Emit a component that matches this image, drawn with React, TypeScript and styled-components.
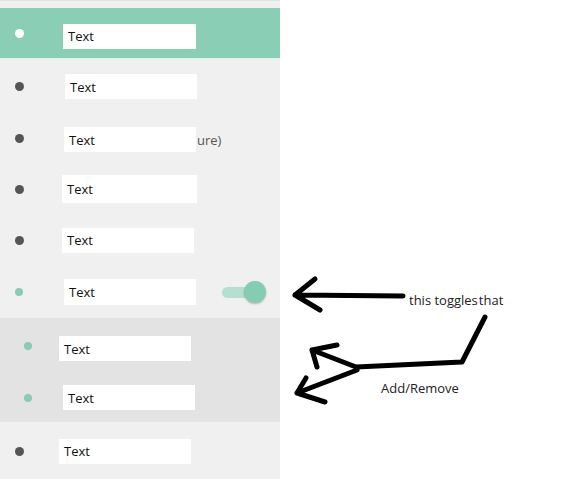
import React from "react";
import styled, { createGlobalStyle } from "styled-components";

const Global = createGlobalStyle`
  html, body { margin: 0; padding: 0; background: #ffffff; }
  body { font-family: "Open Sans", "Liberation Sans", sans-serif; }
`;

const Page = styled.div`
  display: flex;
  width: 581px;
  height: 479px;
  overflow: hidden;
`;

const Panel = styled.div`
  width: 280px;
  flex: none;
  display: flex;
  flex-direction: column;
  background: #f0f0f0;
  padding-top: 6px;
  box-sizing: border-box;
  border-top: 1px solid #e4e4e4;
`;

const Row = styled.div<{ $h: number; $active?: boolean }>`
  height: ${(p) => p.$h}px;
  flex: none;
  display: flex;
  align-items: center;
  box-sizing: border-box;
  background: ${(p) => (p.$active ? "#8acfb5" : "transparent")};
  ${(p) =>
    p.$active
      ? "border-top: 1px solid #e2f3ec; border-bottom: 2px solid #e2f3ec;"
      : ""}
`;

const SubGroup = styled.div`
  display: flex;
  flex-direction: column;
  background: #e3e3e3;
  margin-top: 1px;
`;

const Dot = styled.span<{ $kind: "white" | "dark" | "green"; $x: number }>`
  width: ${(p) => (p.$kind === "green" ? 8 : 9)}px;
  height: ${(p) => (p.$kind === "green" ? 8 : 9)}px;
  border-radius: 50%;
  flex: none;
  margin-left: ${(p) => p.$x}px;
  background: ${(p) =>
    p.$kind === "white" ? "#ffffff" : p.$kind === "green" ? "#86cdb2" : "#555555"};
`;

const Box = styled.div<{ $x: number; $w: number; $h: number; $dy: number }>`
  margin-left: ${(p) => p.$x}px;
  width: ${(p) => p.$w}px;
  height: ${(p) => p.$h}px;
  transform: translateY(${(p) => p.$dy}px);
  flex: none;
  background: #ffffff;
  display: flex;
  align-items: center;
  padding-left: 5px;
  box-sizing: border-box;
  font-size: 13px;
  color: #111111;
`;

const Hidden = styled.span`
  font-size: 13px;
  color: #555555;
  margin-left: 1px;
  transform: translateY(1px);
`;

const Toggle = styled.div`
  position: relative;
  margin-left: auto;
  margin-right: 14px;
  width: 44px;
  height: 22px;
  flex: none;
`;

const Track = styled.div`
  position: absolute;
  left: 0;
  top: 6px;
  width: 34px;
  height: 11px;
  border-radius: 6px;
  background: #b3e0d0;
`;

const Knob = styled.div`
  position: absolute;
  right: 0;
  top: 0;
  width: 22px;
  height: 22px;
  border-radius: 50%;
  background: #84cdb2;
  box-shadow: 0 1px 2px rgba(0, 0, 0, 0.25);
`;

const Annotation = styled.div`
  position: relative;
  flex: 1;
  height: 479px;
`;

const Drawing = styled.svg`
  position: absolute;
  left: 0;
  top: 0;
`;

const Note = styled.div<{ $x: number; $y: number }>`
  position: absolute;
  left: ${(p) => p.$x}px;
  top: ${(p) => p.$y}px;
  display: flex;
  gap: 1px;
  font-size: 13px;
  line-height: 18px;
  color: #222222;
  white-space: nowrap;
`;

type Item = {
  h: number;
  dot: "white" | "dark" | "green";
  dotX: number;
  boxX: number;
  w: number;
  bh: number;
  dy: number;
};

const mainTop: Item[] = [
  { h: 53, dot: "white", dotX: 15, boxX: 39, w: 133, bh: 25, dy: 3 },
  { h: 53, dot: "dark", dotX: 15, boxX: 41, w: 132, bh: 25, dy: 0 },
  { h: 51, dot: "dark", dotX: 15, boxX: 40, w: 132, bh: 25, dy: 1 },
  { h: 50, dot: "dark", dotX: 15, boxX: 38, w: 135, bh: 28, dy: 0 },
  { h: 52, dot: "dark", dotX: 15, boxX: 38, w: 132, bh: 25, dy: 0 },
];

export default function App() {
  return (
    <>
      <Global />
      <Page>
        <Panel>
          {mainTop.map((r, i) => (
            <Row key={i} $h={r.h} $active={i === 0}>
              <Dot $kind={r.dot} $x={r.dotX} />
              <Box $x={r.boxX} $w={r.w} $h={r.bh} $dy={r.dy}>
                Text
              </Box>
              {i === 2 && <Hidden>ure)</Hidden>}
            </Row>
          ))}
          <Row $h={51}>
            <Dot $kind="green" $x={15} />
            <Box $x={41} $w={132} $h={26} $dy={0}>
              Text
            </Box>
            <Toggle>
              <Track />
              <Knob />
            </Toggle>
          </Row>
          <SubGroup>
            <Row $h={55}>
              <Dot $kind="green" $x={24} />
              <Box $x={27} $w={132} $h={25} $dy={3}>
                Text
              </Box>
            </Row>
            <Row $h={49}>
              <Dot $kind="green" $x={24} />
              <Box $x={31} $w={132} $h={25} $dy={0}>
                Text
              </Box>
            </Row>
          </SubGroup>
          <Row $h={58}>
            <Dot $kind="dark" $x={15} />
            <Box $x={35} $w={132} $h={25} $dy={0}>
              Text
            </Box>
          </Row>
        </Panel>
        <Annotation>
          <Drawing width="301" height="479" viewBox="0 0 301 479">
            <g
              fill="none"
              stroke="#000"
              strokeWidth={5}
              strokeLinecap="round"
              strokeLinejoin="round"
            >
              <path d="M123 296 L15 295 M15 295 L35 279 M15 295 L40 310" />
              <path d="M205 317 L182 362 L76 367 L32 350 M32 350 L57 345 M32 350 L37 367" />
              <path d="M77 370 L17 393 M17 393 L26 378 M17 393 L45 402" />
            </g>
          </Drawing>
          <Note $x={129} $y={291}>
            <span>this toggles</span>
            <span>that</span>
          </Note>
          <Note $x={101} $y={379}>
            Add/Remove
          </Note>
        </Annotation>
      </Page>
    </>
  );
}
